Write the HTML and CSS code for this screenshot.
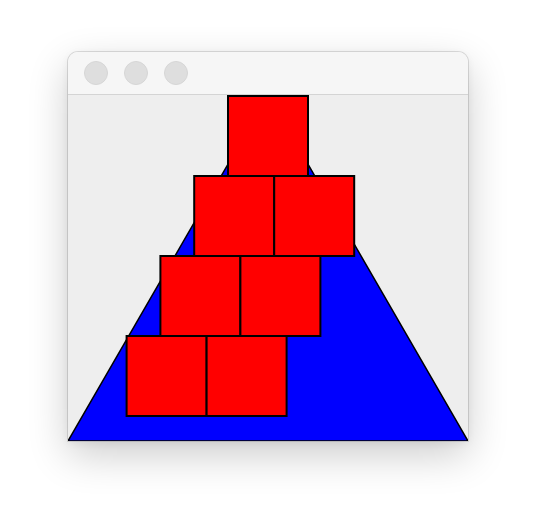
FILE: index.html
```html
<!DOCTYPE html>
<html>
<head>
<meta charset="utf-8">
<link rel="stylesheet" href="styles.css">
</head>
<body>
<div class="window">
  <div class="titlebar">
    <span class="light"></span>
    <span class="light"></span>
    <span class="light"></span>
  </div>
  <div class="content">
    <svg class="canvas" width="400" height="346" viewBox="0 0 400 346">
      <polygon points="200,0 0,346 400,346" fill="#0000ff" stroke="#000" stroke-width="1.5"/>
      <g fill="#ff0000" stroke="#000" stroke-width="2">
        <rect x="160" y="1" width="80" height="80"/>
        <rect x="126.2" y="81" width="80" height="80"/>
        <rect x="206.2" y="81" width="80" height="80"/>
        <rect x="92.4" y="161" width="80" height="80"/>
        <rect x="172.4" y="161" width="80" height="80"/>
        <rect x="58.6" y="241" width="80" height="80"/>
        <rect x="138.6" y="241" width="80" height="80"/>
      </g>
    </svg>
  </div>
</div>
</body>
</html>
```
FILE: styles.css
```css
html, body {
  margin: 0;
  padding: 0;
  background: #ffffff;
}
body {
  padding-top: 52px;
  padding-left: 68px;
  width: 536px;
  height: 526px;
  box-sizing: border-box;
}
.window {
  width: 400px;
  border-radius: 10px 10px 0 0;
  overflow: hidden;
  box-shadow: 0 0 0 1px rgba(0, 0, 0, 0.12), 0 14px 40px rgba(0, 0, 0, 0.2), 0 2px 8px rgba(0,0,0,0.06);
}
.titlebar {
  height: 42px;
  background: #f6f6f6;
  border-bottom: 1px solid #d4d4d4;
  display: flex;
  align-items: center;
  gap: 16px;
  padding-left: 16px;
  box-sizing: content-box;
}
.light {
  width: 22px;
  height: 22px;
  border-radius: 50%;
  background: #dedede;
  border: 1px solid #d6d6d6;
}
.content {
  height: 346px;
  background: #eeeeee;
}
.canvas {
  display: block;
}
```
